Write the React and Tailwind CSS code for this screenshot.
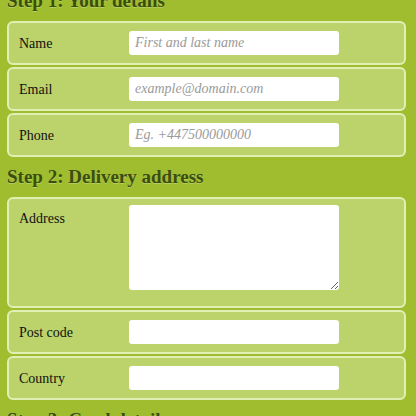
import React from 'react';

const serif = { fontFamily: '"Liberation Serif", "DejaVu Serif", serif' };

function Row({ label, placeholder, tall }) {
  return (
    <div className={`flex ${tall ? 'h-[111px] items-start pt-[6px]' : 'h-[44px] items-center'} rounded-[6px] border-2 border-[#e2efb4] bg-[#bcd26b] pl-[10px]`}>
      <label className={`w-[110px] shrink-0 text-[14px] text-[#111] ${tall ? 'pt-[3px]' : ''}`}>{label}</label>
      {tall ? (
        <textarea className="h-[85px] w-[210px] rounded-[3px] bg-white outline-none" />
      ) : (
        <input
          placeholder={placeholder}
          className="h-[24px] w-[210px] rounded-[3px] bg-white px-[6px] text-[14px] italic text-[#333] outline-none placeholder:text-[#9a9a9a]"
        />
      )}
    </div>
  );
}

function Heading({ children }) {
  return (
    <h2 className="flex h-[40px] items-center text-[19px] font-bold text-[#3b4d0f] [text-shadow:0_1px_0_rgba(255,255,255,0.25)]">
      {children}
    </h2>
  );
}

export default function App() {
  return (
    <div style={serif} className="h-[416px] w-[416px] overflow-hidden bg-[#9fbd2e]">
      <div className="mt-[-19px] flex flex-col pl-[7px] pr-[10px]">
        <Heading>Step 1: Your details</Heading>
        <div className="flex flex-col gap-[2px]">
          <Row label="Name" placeholder="First and last name" />
          <Row label="Email" placeholder="example@domain.com" />
          <Row label="Phone" placeholder="Eg. +447500000000" />
        </div>
        <Heading>Step 2: Delivery address</Heading>
        <div className="flex flex-col gap-[2px]">
          <Row label="Address" tall />
          <Row label="Post code" />
          <Row label="Country" />
        </div>
        <Heading>Step 3: Card details</Heading>
      </div>
    </div>
  );
}
